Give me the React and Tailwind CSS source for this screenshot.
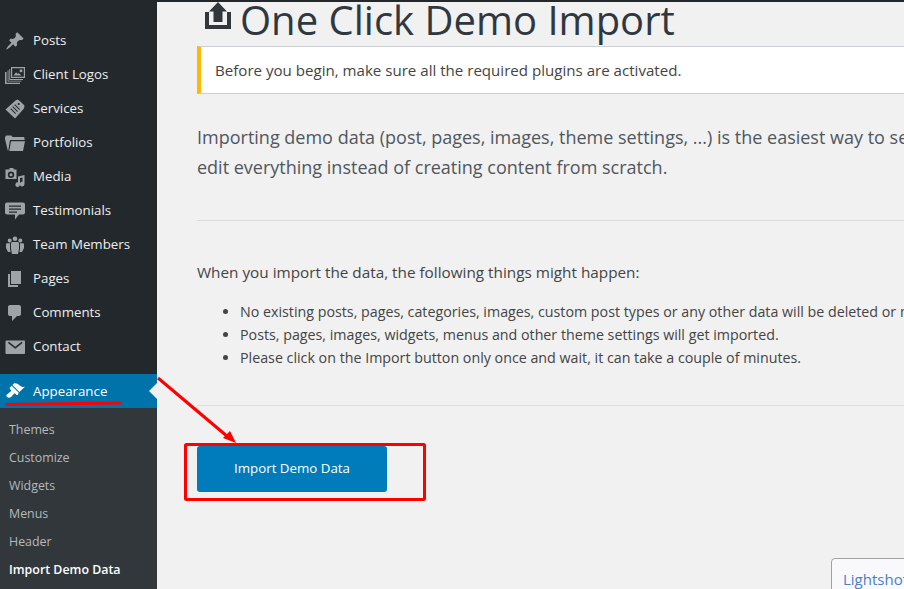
import React from 'react';

const menuIcons = {
  pin: (
    <path d="M10.44 3.02l1.82-1.82 6.36 6.35-1.83 1.82c-1.05-.68-2.48-.57-3.41.36l-.75.75c-.92.93-1.04 2.35-.35 3.41l-1.83 1.82-2.41-2.41-2.8 2.79c-.42.42-3.38 2.71-3.8 2.29s1.86-3.39 2.28-3.81l2.79-2.79L4.1 9.36l1.83-1.82c1.05.69 2.48.57 3.4-.36l.75-.75c.93-.92 1.05-2.35.36-3.41z" />
  ),
  gallery: (
    <path
      fillRule="evenodd"
      d="M6 2h14v11H6V2zm1.200 1.200v8.600h11.600V3.200H7.200zM8.500 10.500l2.600-3.200 1.600 1.700 1-1 2.800 2.500h-8zM16 4.200a1.500 1.500 0 1 1 0 3 1.500 1.500 0 0 1 0-3zM4.300 4H5.200v10.100H18V15H4.300V4zM2.600 5.500h.9v10.200H16.500v.9H2.600V5.500zM0 7h1.500v10.800H15V19H0V7z"
    />
  ),
  services: (
    <path
      fillRule="evenodd"
      d="M12.500 0.500l2.300 1.500 4.700 4.500-.5 3L10 19.500 0.500 10.500 10.500 1.500l2-1zm1.200 3.400a1.100 1.100 0 1 0 0 2.200 1.100 1.100 0 0 0 0-2.200zM10 5.300l-.7.7 5 5 .7-.7-5-5zM8 7.300l-.7.7 5 5 .7-.7-5-5zM6 9.300l-.7.7 5 5 .7-.7-5-5z"
    />
  ),
  folder: (
    <path d="M0 4.500L1 2.500h5.500l1 1.500H19l.5 1V7H5L3.300 17.500H2.800L0 6V4.500zM6 8.300h14L18 18H4.300L6 8.300z" />
  ),
  media: (
    <path
      fillRule="evenodd"
      d="M4.500 1h4v1.500h3V12H.5V2.500h4V1zm1.500 3.500a3.200 3.200 0 1 0 0 6.400 3.200 3.200 0 0 0 0-6.400zm0 1.700a1.500 1.500 0 1 1 0 3 1.500 1.500 0 0 1 0-3zM13 9.500l6.500-1.500v9a2.300 2.300 0 1 1-2-2.200V10.500l-2.500.6V17.500a2.300 2.300 0 1 1-2-2.200V9.500z"
    />
  ),
  testimonial: (
    <path
      fillRule="evenodd"
      d="M2 1.500h16c1.100 0 2 .9 2 2v8c0 1.100-.9 2-2 2h-4l-4 5v-5H2c-1.100 0-2-.9-2-2v-8c0-1.100.9-2 2-2zm2 3v1.300h12V4.500H4zm0 3v1.300h12V7.500H4zm0 3v1.300h8v-1.300H4z"
    />
  ),
  team: (
    <path d="M10 6a2.300 2.300 0 1 1 0-4.600A2.300 2.300 0 0 1 10 6zM4.700 7.500a2 2 0 1 1 0-4 2 2 0 0 1 0 4zm10.600 0a2 2 0 1 1 0-4 2 2 0 0 1 0 4zM7.500 7h5c1 0 1.500.7 1.500 1.500V14l-1 5H7l-1-5V8.500C6 7.700 6.500 7 7.500 7zM1 9.500C1 8.700 1.600 8.200 2.300 8.200H5V14l.6 3H3L1 13V9.500zm18 0c0-.8-.6-1.300-1.300-1.300H15V14l-.6 3H17l2-4V9.500z" />
  ),
  pages: <path d="M6 15V2h10v13H6zm-1 1h8v2H3V5h2v11z" />,
  comment: (
    <path d="M5 2h9c1.100 0 2 .9 2 2v7c0 1.100-.9 2-2 2h-2l-5 5v-5H5c-1.100 0-2-.9-2-2V4c0-1.100.9-2 2-2z" />
  ),
  mail: (
    <path d="M1.500 3.500h17.500c.6 0 1 .4 1 1v11.500c0 .6-.4 1-1 1H1.500c-.6 0-1-.4-1-1V4.500c0-.6.4-1 1-1zm8.750 8.200l7.300-5.800-.9-1.100-6.400 5-6.400-5-.9 1.100 7.300 5.800z" />
  ),
  brush: (
    <path d="M14.480 11.060L7.410 3.990l1.500-1.500c.5-.56 2.300-.47 3.510.32 1.210.8 1.430 1.280 2.910 2.100 1.180.64 2.450 1.260 4.450.85zm-.71.71L6.700 4.700 4.930 6.470c-.39.39-.39 1.020 0 1.410l1.060 1.060c.39.39.39 1.030 0 1.420-.6.6-1.430 1.110-2.210 1.690-.35.26-.7.530-1.010.840C1.430 13.230.91 14.380 2 16c1.380 1.380 3.100.81 4.400-.36.27-.26.54-.55.8-.85.62-.78 1.160-1.500 1.740-2.090.38-.38 1.010-.38 1.400 0l1.060 1.060c.39.39 1.020.39 1.410 0z" />
  ),
};

const menuItems = [
  { label: 'Posts', icon: 'pin' },
  { label: 'Client Logos', icon: 'gallery' },
  { label: 'Services', icon: 'services' },
  { label: 'Portfolios', icon: 'folder' },
  { label: 'Media', icon: 'media' },
  { label: 'Testimonials', icon: 'testimonial' },
  { label: 'Team Members', icon: 'team' },
  { label: 'Pages', icon: 'pages' },
  { label: 'Comments', icon: 'comment' },
  { label: 'Contact', icon: 'mail' },
];

const subItems = ['Themes', 'Customize', 'Widgets', 'Menus', 'Header'];

function MenuIcon({ name, className }) {
  return (
    <svg viewBox="0 0 20 20" fill="currentColor" className={className}>
      {menuIcons[name]}
    </svg>
  );
}

function Sidebar() {
  return (
    <aside className="w-[157px] shrink-0 bg-[#23282d] pt-[24px] text-[13.3px] text-[#eeeeee]">
      {menuItems.map((item) => (
        <div key={item.label} className="flex h-[34px] items-center">
          <div className="flex w-[30px] shrink-0 justify-center">
            <MenuIcon name={item.icon} className="h-[20px] w-[20px] text-[#9ea3a8]" />
          </div>
          <span className="ml-[3px]">{item.label}</span>
        </div>
      ))}
      <div className="mt-[10px] flex h-[34px] items-center bg-[#0073aa] text-white">
        <div className="flex w-[30px] shrink-0 justify-center">
          <MenuIcon name="brush" className="h-[20px] w-[20px] text-white" />
        </div>
        <span className="ml-[3px] mt-[2px]">Appearance</span>
        <div className="ml-auto h-0 w-0 border-y-[8px] border-r-[8px] border-y-transparent border-r-[#f1f1f1]" />
      </div>
      <div className="h-[181px] bg-[#32373c] pt-[8px] text-[12.4px] text-[#b4b9be]">
        {subItems.map((sub) => (
          <div key={sub} className="flex h-[28px] items-center pl-[9px]">
            {sub}
          </div>
        ))}
        <div className="flex h-[28px] items-center pl-[9px] font-semibold text-white">Import Demo Data</div>
      </div>
    </aside>
  );
}

function Main() {
  return (
    <main className="min-w-0 flex-1 overflow-hidden">
      <div className="h-[2px] bg-[#23282d]" />
      <div className="w-[1100px] pl-[40px] text-[#444444]">
        <div className="flex h-[44px] items-start text-[#32373c]">
          <svg viewBox="0 0 26 27" fill="currentColor" className="ml-[8px] mr-[9px] h-[27px] w-[26px] shrink-0">
            <path d="M13 0L22 9.500h-4.500V20h-9V9.500H4L13 0zM0 10h4v13h18V10h4v17H0V10z" />
          </svg>
          <h1 className="text-[40px] leading-[36px] font-normal text-[#2f3840]">One Click Demo Import</h1>
        </div>
        <div className="flex h-[48px] items-center border-y border-l-[4px] border-y-[#ccd0d4] border-l-[#ffb900] bg-white pl-[14px] text-[15.1px]">
          Before you begin, make sure all the required plugins are activated.
        </div>
        <p className="mt-[28px] text-[18px] leading-[30px] text-[#50575e]">
          Importing demo data (post, pages, images, theme settings, ...) is the easiest way to setup your theme.
          <br />
          edit everything instead of creating content from scratch.
        </p>
        <div className="mt-[38px] h-px bg-[#dddddd]" />
        <p className="mt-[40px] text-[15.3px] leading-[23px]">When you import the data, the following things might happen:</p>
        <ul className="mt-[16px] list-disc pl-[43px] text-[14.25px] leading-[23px]">
          <li>No existing posts, pages, categories, images, custom post types or any other data will be deleted or modified.</li>
          <li>Posts, pages, images, widgets, menus and other theme settings will get imported.</li>
          <li>Please click on the Import button only once and wait, it can take a couple of minutes.</li>
        </ul>
        <div className="mt-[36px] h-px bg-[#dddddd]" />
        <button className="mt-[40px] h-[46px] w-[190px] rounded-[3px] bg-[#007cba] text-[13.3px] text-white">
          Import Demo Data
        </button>
      </div>
    </main>
  );
}

export default function App() {
  return (
    <div className="relative flex h-[589px] w-[904px] overflow-hidden bg-[#f1f1f1] font-['Open_Sans','Noto_Sans',sans-serif]">
      <Sidebar />
      <Main />

      {/* lightshot tab sitting over the page corner */}
      <div className="absolute left-[831px] top-[558px] h-[40px] w-[100px] rounded-tl-[4px] border border-[#a0a0a0] bg-[#f9f9fb] pl-[11px] pt-[9px] text-[15px] leading-[22px] text-[#4a7fc8]">
        Lightshot
      </div>

      {/* red annotations drawn on top of the screenshot */}
      <svg className="pointer-events-none absolute left-0 top-0" width="904" height="589" viewBox="0 0 904 589" fill="none">
        <path d="M7 404.500 L120 403" stroke="#ff0000" strokeWidth="3" strokeLinecap="round" />
        <path d="M158 378 L228 437" stroke="#ff0000" strokeWidth="3" />
        <path d="M236 443 L223 438 L230 431 Z" fill="#ff0000" />
        <rect x="185.500" y="444.500" width="239" height="55" rx="1" stroke="#ff0000" strokeWidth="3" />
      </svg>
    </div>
  );
}
